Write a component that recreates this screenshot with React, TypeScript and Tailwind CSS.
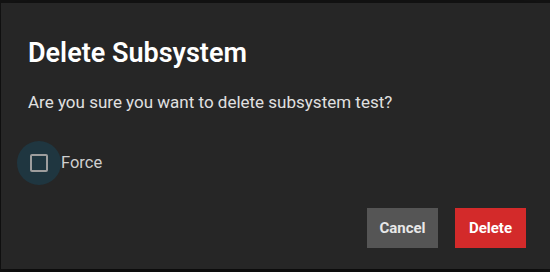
export default function App() {
  return (
    <div className="h-[272px] w-[550px] overflow-hidden bg-[#141414] pt-[3px] pl-[1px] font-['Roboto',sans-serif]">
      <div className="flex h-[266px] w-[549px] flex-col bg-[#262626] px-[27px] shadow-[0_8px_24px_rgba(0,0,0,0.5)]">
        <h2 className="mt-[33px] text-[27px] leading-[34px] font-semibold text-white">
          Delete Subsystem
        </h2>
        <p className="mt-[20px] text-[17px] leading-[24px] text-[#e0e0e0]">
          Are you sure you want to delete subsystem test?
        </p>
        <label className="-ml-[11px] mt-[27px] flex items-center">
          <span className="flex h-[44px] w-[44px] items-center justify-center rounded-full bg-[#1f3640]">
            <span className="h-[18px] w-[18px] rounded-[2px] border-2 border-[#9e9e9e]" />
          </span>
          <span className="text-[16.5px] text-[#cfcfcf]">Force</span>
        </label>
        <div className="mt-auto mb-[21px] mr-[-3px] flex justify-end gap-[17px]">
          <button className="h-[40px] w-[71px] bg-[#555555] text-[15px] font-bold text-[#e8e8e8]">
            Cancel
          </button>
          <button className="h-[40px] w-[71px] bg-[#d32a2a] text-[15px] font-bold text-white">
            Delete
          </button>
        </div>
      </div>
    </div>
  );
}
